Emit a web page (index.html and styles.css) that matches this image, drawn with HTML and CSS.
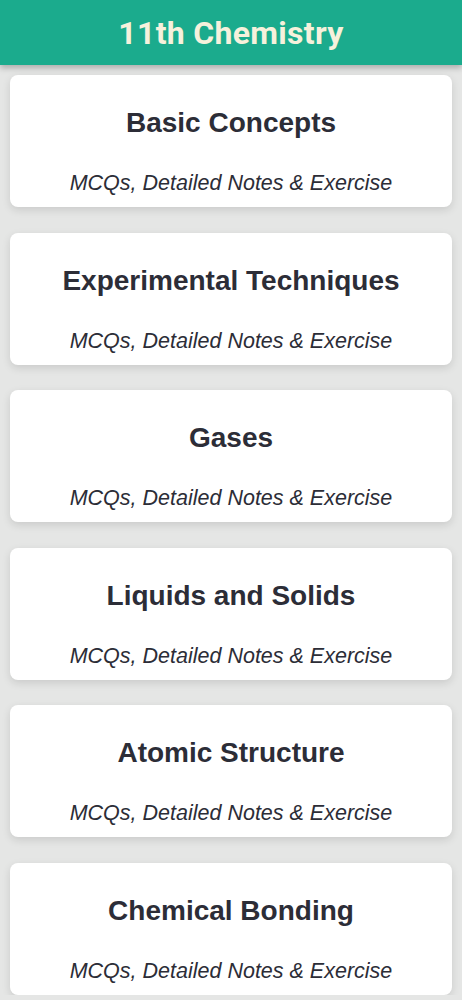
FILE: index.html
```html
<!DOCTYPE html>
<html>
<head>
<meta charset="utf-8">
<link rel="stylesheet" href="styles.css">
</head>
<body>
<header class="topbar"><h1 class="topbar-title">11th Chemistry</h1></header>
<main class="list">
  <div class="card"><h2 class="card-title">Basic Concepts</h2><p class="card-sub">MCQs, Detailed Notes &amp; Exercise</p></div>
  <div class="card"><h2 class="card-title">Experimental Techniques</h2><p class="card-sub">MCQs, Detailed Notes &amp; Exercise</p></div>
  <div class="card"><h2 class="card-title">Gases</h2><p class="card-sub">MCQs, Detailed Notes &amp; Exercise</p></div>
  <div class="card"><h2 class="card-title">Liquids and Solids</h2><p class="card-sub">MCQs, Detailed Notes &amp; Exercise</p></div>
  <div class="card"><h2 class="card-title">Atomic Structure</h2><p class="card-sub">MCQs, Detailed Notes &amp; Exercise</p></div>
  <div class="card"><h2 class="card-title">Chemical Bonding</h2><p class="card-sub">MCQs, Detailed Notes &amp; Exercise</p></div>
</main>
</body>
</html>
```
FILE: styles.css
```css
html, body { margin: 0; padding: 0; }
body { background: #e5e6e5; font-family: "Liberation Sans", Arial, sans-serif; overflow: hidden; }
.topbar {
  height: 65px;
  background: #1bab8d;
  display: flex;
  align-items: center;
  justify-content: center;
  box-shadow: 0 3px 6px rgba(0,0,0,0.25);
  position: relative;
  z-index: 1;
}
.topbar-title {
  margin: 0;
  font-family: Roboto, "Liberation Sans", sans-serif;
  font-weight: 700;
  font-size: 32px;
  color: #f6f1dc;
  letter-spacing: 0.3px;
}
.list {
  display: flex;
  flex-direction: column;
  gap: 25.6px;
  padding: 10px 10px 0;
}
.card {
  background: #fff;
  border-radius: 8px;
  height: 132px;
  flex: none;
  box-sizing: border-box;
  padding-top: 31px;
  display: flex;
  flex-direction: column;
  align-items: center;
  box-shadow: 0 3px 8px rgba(0,0,0,0.12);
}
.card-title {
  margin: 0;
  font-size: 28px;
  line-height: 34px;
  font-weight: 700;
  color: #2c2d37;
}
.card-sub {
  margin: 30px 0 0;
  font-size: 21.5px;
  line-height: 26px;
  font-style: italic;
  color: #2c2d37;
}
```
